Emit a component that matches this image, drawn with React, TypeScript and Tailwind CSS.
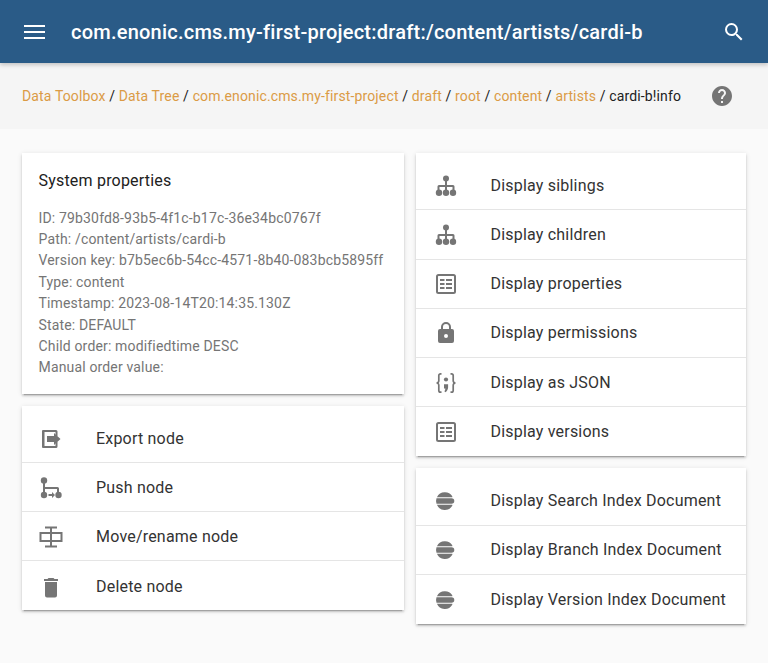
import React from "react";

const G = "#757575";

function Icon({ children }: { children: React.ReactNode }) {
  return (
    <svg width="24" height="24" viewBox="0 0 24 24" fill={G} className="shrink-0">
      {children}
    </svg>
  );
}

const Tree = () => (
  <Icon>
    <circle cx="12" cy="4.600" r="3" />
    <circle cx="5" cy="18.800" r="3.200" />
    <circle cx="12" cy="18.800" r="3.200" />
    <circle cx="19" cy="18.800" r="3.200" />
    <path d="M11 5h2v6h6a1.500 1.500 0 0 1 1.500 1.500V18h-2v-5H13v5h-2v-5H5.500v5h-2v-5.500A1.500 1.500 0 0 1 5 11h6z" />
  </Icon>
);
const ListBox = () => (
  <Icon>
    <path
      fillRule="evenodd"
      d="M4.500 2h15a2.500 2.500 0 0 1 2.500 2.500v15a2.500 2.500 0 0 1-2.500 2.500h-15A2.500 2.500 0 0 1 2 19.500v-15A2.500 2.500 0 0 1 4.500 2zm0 2a.5.5 0 0 0-.5.500v15a.5.5 0 0 0 .5.500h15a.5.5 0 0 0 .5-.5v-15a.5.5 0 0 0-.5-.5z"
    />
    <path d="M6 7h4.500v2H6zM12 7h6v2h-6zM6 11h4.500v2H6zM12 11h6v2h-6zM6 15h4.500v2H6zM12 15h6v2h-6z" />
  </Icon>
);
const Lock = () => (
  <Icon>
    <path
      fillRule="evenodd"
      d="M18 8h-1V6A5 5 0 0 0 7 6v2H6a2 2 0 0 0-2 2v10a2 2 0 0 0 2 2h12a2 2 0 0 0 2-2V10a2 2 0 0 0-2-2zM9 6a3 3 0 0 1 6 0v2H9zm3 11a2 2 0 1 1 0-4 2 2 0 0 1 0 4z"
    />
  </Icon>
);
const Json = () => (
  <Icon>
    <path
      fill="none"
      stroke={G}
      strokeWidth="1.700"
      d="M7.500 2.800H6.500a1.700 1.700 0 0 0-1.700 1.700v5.200A2.300 2.300 0 0 1 2.500 12a2.300 2.300 0 0 1 2.300 2.300v5.200a1.700 1.700 0 0 0 1.700 1.700h1M16.500 2.800h1a1.700 1.700 0 0 1 1.700 1.700v5.200a2.300 2.300 0 0 0 2.300 2.300 2.300 2.300 0 0 0-2.300 2.300v5.200a1.700 1.700 0 0 1-1.700 1.700h-1"
    />
    <circle cx="12" cy="8.500" r="2.100" />
    <path d="M10 13.200h4.100v3.300c0 1.500-1.300 4.200-2.700 4.700l-1-.9c.6-.8.9-1.600 1-2.800H10z" />
  </Icon>
);
const Elastic = () => (
  <Icon>
    <path d="M11 3.300a8.700 8.700 0 0 1 7.300 3.900v1H2.900A8.700 8.700 0 0 1 11 3.300z" />
    <path d="M2.500 9.200H17.500a2.800 2.800 0 0 1 0 5.600H2.500a8.700 8.700 0 0 1 0-5.600z" />
    <path d="M2.900 15.800h15.400v1A8.700 8.700 0 0 1 2.900 15.800z" />
  </Icon>
);
const Export = () => (
  <Icon>
    <path d="M4 3h13a1.500 1.500 0 0 1 1.500 1.500V9h-2V5H5.500v14h11v-4h2v4.500A1.500 1.500 0 0 1 17 21H4a1 1 0 0 1-1-1V4a1 1 0 0 1 1-1z" />
    <path d="M8 9h7V6l6.500 6-6.500 6v-3H8z" />
  </Icon>
);
const Push = () => (
  <Icon>
    <circle cx="5" cy="4.500" r="3.200" />
    <circle cx="5" cy="19" r="3.200" />
    <circle cx="19.500" cy="19" r="3.200" />
    <path d="M4 5h2v6h12.500a1.500 1.500 0 0 1 1.500 1.500V18h-2v-5H6v5H4z" />
    <path d="M9.500 18h3.500v-2l3 3-3 3v-2H9.500z" />
  </Icon>
);
const Move = () => (
  <Icon>
    <path d="M6 1.500h12v2h-5V7h10.500v10H13v3.500h5v2H6v-2h5V17H.5V7H11V3.500H6zM2.500 9v6H11V9zm10.500 0v6h8.500V9z" />
  </Icon>
);
const Trash = () => (
  <Icon>
    <path d="M6 20.500a2 2 0 0 0 2 2h8a2 2 0 0 0 2-2V7H6zM19 4h-3.500l-1-1h-5l-1 1H5v2h14z" />
  </Icon>
);

function Row({ icon, label, inset = "pl-[17.500px]" }: { icon: React.ReactNode; label: string; inset?: string }) {
  return (
    <div className={`flex h-[49.100px] items-center border-b border-[#e5e5e5] pt-[1.400px] last:border-b-0 ${inset}`}>
      {icon}
      <span className="ml-[33px] text-[16px] tracking-[0.2px] text-[#333333]">{label}</span>
    </div>
  );
}

function Card({ children }: { children: React.ReactNode }) {
  return (
    <div className="bg-white pt-[8.400px] shadow-[0_2px_2px_0_rgba(0,0,0,0.14),0_3px_1px_-2px_rgba(0,0,0,0.2),0_1px_5px_0_rgba(0,0,0,0.12)]">
      {children}
    </div>
  );
}

const crumbs = [
  "Data Toolbox",
  "Data Tree",
  "com.enonic.cms.my-first-project",
  "draft",
  "root",
  "content",
  "artists",
];

const props = [
  "ID: 79b30fd8-93b5-4f1c-b17c-36e34bc0767f",
  "Path: /content/artists/cardi-b",
  "Version key: b7b5ec6b-54cc-4571-8b40-083bcb5895ff",
  "Type: content",
  "Timestamp: 2023-08-14T20:14:35.130Z",
  "State: DEFAULT",
  "Child order: modifiedtime DESC",
  "Manual order value:",
];

export default function App() {
  const leftInset = "pl-[17px]";
  return (
    <div className="h-[663px] w-[768px] overflow-hidden bg-[#fafafa] font-['Roboto',sans-serif]">
      <header className="relative z-10 flex h-[63px] items-center bg-[#2a5b87] pl-[24px] pr-[22px] text-white shadow-[0_2px_4px_rgba(0,0,0,0.2)]">
        <svg width="21" height="14" viewBox="0 0 21 14" fill="#ffffff" className="shrink-0">
          <path d="M0 0h21v2H0zM0 6h21v2H0zM0 12h21v2H0z" />
        </svg>
        <h1 className="ml-[26px] flex-1 text-[20px] font-medium whitespace-nowrap tracking-[0.23px]">
          com.enonic.cms.my-first-project:draft:/content/artists/cardi-b
        </h1>
        <svg width="24" height="24" viewBox="0 0 24 24" fill="#ffffff" className="shrink-0">
          <path d="M15.500 14h-.79l-.28-.27A6.470 6.470 0 0 0 16 9.500 6.500 6.500 0 1 0 9.500 16c1.610 0 3.090-.59 4.230-1.570l.27.28v.79l5 4.990L20.490 19l-4.990-5zm-6 0C7.010 14 5 11.990 5 9.500S7.010 5 9.500 5 14 7.010 14 9.500 11.990 14 9.500 14z" />
        </svg>
      </header>

      <nav className="flex h-[66px] items-center bg-[#f5f5f5] pl-[22px] pr-[34px] text-[14px] tracking-[0.138px] whitespace-nowrap text-[#212121]">
        <div className="flex-1">
          {crumbs.map((c) => (
            <React.Fragment key={c}>
              <span className="text-[#db9b45]">{c}</span> /{" "}
            </React.Fragment>
          ))}
          <span>cardi-b!info</span>
        </div>
        <svg width="24" height="24" viewBox="0 0 24 24" fill={G} className="shrink-0">
          <path d="M12 2C6.480 2 2 6.480 2 12s4.480 10 10 10 10-4.480 10-10S17.520 2 12 2zm1 17h-2v-2h2v2zm2.070-7.750-.9.920C13.450 12.900 13 13.500 13 15h-2v-.5c0-1.100.45-2.100 1.170-2.830l1.240-1.260c.37-.36.590-.86.590-1.410 0-1.100-.9-2-2-2s-2 .9-2 2H8c0-2.210 1.790-4 4-4s4 1.790 4 4c0 .88-.36 1.680-.93 2.250z" />
        </svg>
      </nav>

      <main className="flex gap-[12px] pl-[22px] pt-[24px]">
        <div className="flex w-[382px] flex-col gap-[12.200px]">
          <div className="h-[240.500px] bg-white px-[16.500px] pt-[17px] shadow-[0_2px_2px_0_rgba(0,0,0,0.14),0_3px_1px_-2px_rgba(0,0,0,0.2),0_1px_5px_0_rgba(0,0,0,0.12)]">
            <h2 className="text-[16px] leading-[22px] tracking-[0.2px] text-[#212121]">System properties</h2>
            <div className="mt-[15.500px] text-[14px] leading-[21.400px] tracking-[0.16px] text-[#757575]">
              {props.map((p) => (
                <div key={p} className="whitespace-nowrap">{p}</div>
              ))}
            </div>
          </div>
          <Card>
            <Row inset={leftInset} icon={<Export />} label="Export node" />
            <Row inset={leftInset} icon={<Push />} label="Push node" />
            <Row inset={leftInset} icon={<Move />} label="Move/rename node" />
            <Row inset={leftInset} icon={<Trash />} label="Delete node" />
          </Card>
        </div>
        <div className="flex w-[330px] flex-col gap-[12.300px]">
          <Card>
            <Row icon={<Tree />} label="Display siblings" />
            <Row icon={<Tree />} label="Display children" />
            <Row icon={<ListBox />} label="Display properties" />
            <Row icon={<Lock />} label="Display permissions" />
            <Row icon={<Json />} label="Display as JSON" />
            <Row icon={<ListBox />} label="Display versions" />
          </Card>
          <Card>
            <Row icon={<Elastic />} label="Display Search Index Document" />
            <Row icon={<Elastic />} label="Display Branch Index Document" />
            <Row icon={<Elastic />} label="Display Version Index Document" />
          </Card>
        </div>
      </main>
    </div>
  );
}
